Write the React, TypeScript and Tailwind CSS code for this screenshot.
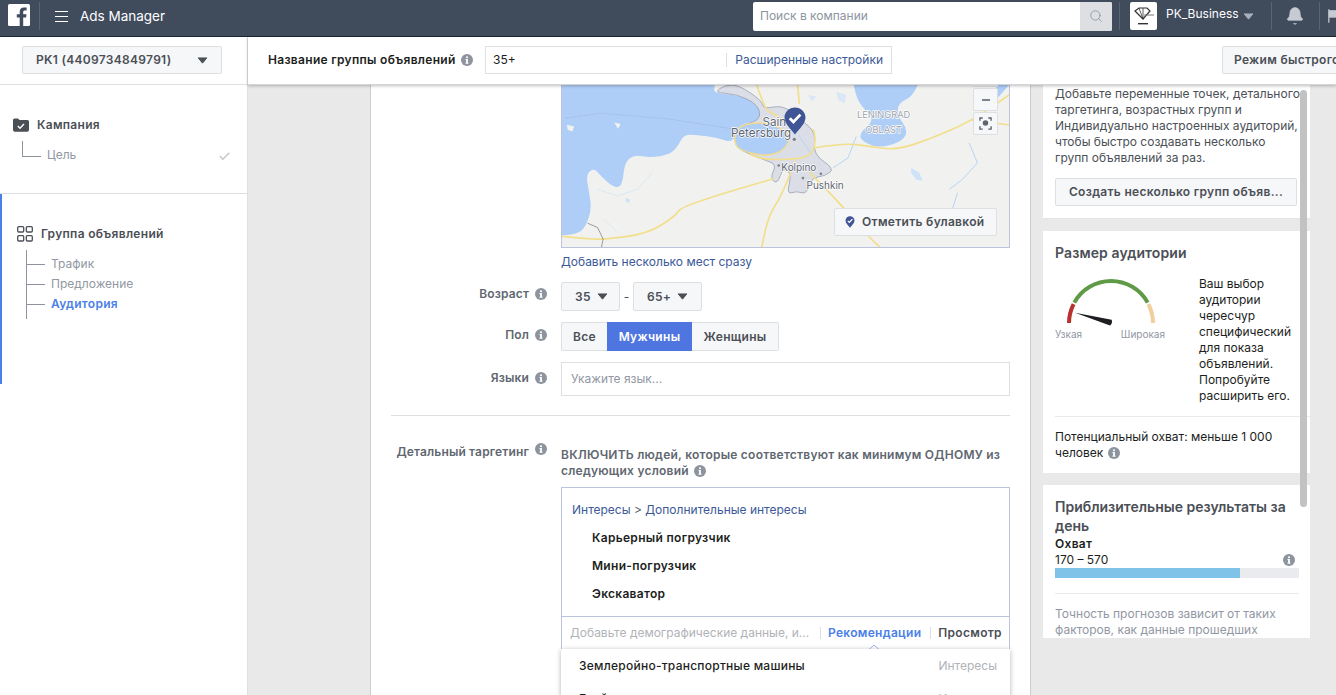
import React from "react";
import { Search, Bell, Check } from "lucide-react";

type P = [number, number];

const smooth = (pts: P[], closed = false) => {
  const mid = (a: P, b: P): P => [(a[0] + b[0]) / 2, (a[1] + b[1]) / 2];
  const n = pts.length;
  if (closed) {
    const s = mid(pts[n - 1], pts[0]);
    let d = `M${s[0]} ${s[1]}`;
    pts.forEach((p, i) => {
      const m = mid(p, pts[(i + 1) % n]);
      d += ` Q${p[0]} ${p[1]} ${m[0]} ${m[1]}`;
    });
    return d + " Z";
  }
  let d = `M${pts[0][0]} ${pts[0][1]}`;
  for (let i = 1; i < n - 1; i++) {
    const m = mid(pts[i], pts[i + 1]);
    d += ` Q${pts[i][0]} ${pts[i][1]} ${m[0]} ${m[1]}`;
  }
  return d + ` L${pts[n - 1][0]} ${pts[n - 1][1]}`;
};

const gulf: P[] = [[-100, -100], [495, -100], [495, 15], [488, 40], [560, 45], [625, 70], [640, 100], [632, 122], [560, 135], [552, 190], [500, 175], [440, 165], [400, 165], [385, 195], [360, 225], [295, 235], [255, 225], [222, 245], [215, 320], [190, 325], [150, 290], [130, 265], [105, 285], [115, 340], [122, 390], [105, 440], [85, 462], [33, 470], [-100, 475]];
const lake: P[] = [[905, -20], [1120, -20], [1090, 50], [1045, 70], [1045, 110], [1075, 150], [1060, 185], [990, 205], [945, 190], [925, 165], [975, 120], [945, 90], [920, 55]];
const district: P[] = [[490, 38], [525, 15], [565, 15], [635, 62], [640, 88], [700, 75], [760, 125], [798, 160], [790, 225], [855, 268], [825, 290], [785, 295], [770, 345], [740, 335], [710, 345], [725, 285], [700, 262], [682, 315], [660, 295], [680, 255], [640, 240], [570, 212], [552, 190], [558, 140], [632, 122], [625, 75], [560, 42]];
const bay: P[] = [[558, 140], [640, 125], [705, 150], [722, 180], [695, 218], [640, 230], [570, 212], [552, 190]];
const roads: P[][] = [
  [[35, 472], [100, 478], [150, 482], [290, 465], [375, 410], [390, 385], [510, 345], [670, 298]],
  [[792, 205], [880, 190], [960, 200], [1040, 212], [1150, 175], [1270, 122], [1380, 45]],
  [[1270, 122], [1378, 135]],
  [[743, 15], [748, 70]],
  [[620, 15], [645, 90], [668, 100], [705, 125]],
  [[790, 150], [798, 165], [790, 225], [740, 240], [640, 240], [600, 225]],
  [[735, 245], [700, 340], [655, 410], [635, 504]],
  [[780, 280], [860, 360], [950, 465], [990, 504]],
];

const Info = ({ className = "" }: { className?: string }) => (
  <svg viewBox="0 0 12 12" className={`w-3 h-3 shrink-0 ${className}`}>
    <circle cx="6" cy="6" r="6" fill="#8d949e" />
    <rect x="5.1" y="5" width="1.8" height="4.4" fill="#fff" />
    <rect x="4.4" y="5" width="1.6" height="0.9" fill="#fff" />
    <rect x="4.4" y="8.7" width="3.2" height="0.9" fill="#fff" />
    <circle cx="6" cy="3.2" r="1.05" fill="#fff" />
  </svg>
);

const Caret = ({ className = "", fill = "#4b4f56" }: { className?: string; fill?: string }) => (
  <svg viewBox="0 0 12 8" className={`w-[11px] h-[7px] shrink-0 ${className}`}>
    <path d="M1 1 H11 L6 7 Z" fill={fill} stroke={fill} strokeWidth="1" strokeLinejoin="round" />
  </svg>
);

const PinShape = ({ className = "" }: { className?: string }) => (
  <svg viewBox="0 0 22 28" className={className}>
    <path d="M11 0.5C5 0.5 0.5 5 0.5 10.6c0 6.4 6.6 11.6 10.5 16.9 3.9-5.3 10.5-10.5 10.5-16.9C21.5 5 17 0.5 11 0.5Z" fill="#3f5595" />
    <path d="M5.8 11.3l3.6 3.6 7-7.3" fill="none" stroke="#fff" strokeWidth="2.8" />
  </svg>
);

const MapDrawing = () => (
  <svg viewBox="33 15 1347 489" className="block w-full h-full" preserveAspectRatio="none">
    <rect x="33" y="15" width="1347" height="489" fill="#f1f2ef" />
    <path d={smooth(gulf, true)} fill="#aecdf7" />
    <path d={smooth(lake, true)} fill="#aecdf7" />
    <path d="M1340 15 H1380 L1345 55 Z" fill="#aecdf7" />
    <path d="M860 35 l30 10 -5 25 -20 -10 Z M775 45 l25 5 -15 15 Z" fill="#d9e7f6" />
    <path d="M1085 265 l25 15 10 25 -20 -5 -15 -20 Z" fill="#cfe2f8" />
    <path d="M225 355 l12 5 -2 12 -10 -6 Z" fill="#cfe2f8" />
    <path d="M48 135 l22 5 -6 15 -14 -5 Z M190 128 l20 5 -8 14 Z" fill="#f1f2ef" />
    <path d="M45 115 L150 100 L360 118 L550 148" fill="none" stroke="#8fa6cc" strokeWidth="1.5" strokeDasharray="5 4" />
    <path d="M850 265 L895 235 L920 170 M1200 330 L1240 300 L1285 250 L1260 190 M1200 420 L1225 340" fill="none" stroke="#a9cdf6" strokeWidth="2.5" />
    <path d="M140 330 L200 350 L260 330 L305 280 M160 420 L200 460" fill="none" stroke="#cfe2f8" strokeWidth="2" />
    <path d={smooth(district, true)} fill="#dbdee6" stroke="#8991a6" strokeWidth="2" strokeLinejoin="round" />
    <path d={smooth(bay, true)} fill="#aecdf7" stroke="#f0dc8a" strokeWidth="4" />
    <path d="M745 165 L785 225" stroke="#a9cdf6" strokeWidth="2" fill="none" />
    <g fill="none" stroke="#f2de8b" strokeWidth="5" strokeLinejoin="round" strokeLinecap="round">
      {roads.map((r, i) => (
        <path key={i} d={smooth(r)} />
      ))}
    </g>
    <path d="M110 432 L140 445 L157 480 L152 504" fill="none" stroke="#6b6f76" strokeWidth="2" />
    <g fill="#7d818a">
      <circle cx="733" cy="179" r="5" />
      <circle cx="686" cy="258" r="4" />
      <circle cx="813" cy="283" r="4" />
      <circle cx="759" cy="296" r="4" />
    </g>
    <g fontFamily="Inter, sans-serif" stroke="#fff" strokeWidth="4" paintOrder="stroke" strokeLinejoin="round">
      <text x="637" y="138" fontSize="35" fill="#5d6472">Sain</text>
      <text x="542" y="171" fontSize="35" fill="#5d6472">Petersburg</text>
      <text x="694" y="274" fontSize="30" fill="#5d6472">Kolpino</text>
      <text x="770" y="328" fontSize="30" fill="#5d6472">Pushkin</text>
      <text x="922" y="115" fontSize="28" fill="#a0a4ac">LENINGRAD</text>
      <text x="947" y="159" fontSize="28" fill="#a0a4ac">OBLAST</text>
    </g>
  </svg>
);

const Gauge = () => (
  <svg viewBox="0 0 110 52" className="block w-[110px] h-[52px]">
    <g fill="none" strokeWidth="4">
      <path d="M14 48 A42 42 0 0 1 18.6 29.2" stroke="#b8312f" />
      <path d="M19.3 27.6 A42 42 0 0 1 92.7 27.6" stroke="#5f9a47" />
      <path d="M93.4 29.2 A42 42 0 0 1 98 48" stroke="#f0cf9d" />
    </g>
    <path d="M20 37.7 L56.6 44.8 Q58 48 55 50.6 Z" fill="#1c1e21" />
  </svg>
);

const Row = ({ label, children, className = "", labelClass = "items-center -translate-y-[2px]" }: { label: string; children: React.ReactNode; className?: string; labelClass?: string }) => (
  <div className={`grid grid-cols-[156px_449px] gap-x-[14px] ${className}`}>
    <div className={`flex justify-end gap-[6px] text-[12px] font-semibold tracking-[0.15px] text-[#606770] whitespace-nowrap ${labelClass}`}>
      <span>{label}</span>
      <Info />
    </div>
    <div>{children}</div>
  </div>
);

const btn = "border border-[#dddfe2] bg-[#f6f7f9] rounded-[2px] text-[12px] font-semibold tracking-[0.3px] text-[#4b4f56] flex items-center";

export default function App() {
  return (
    <div className="w-[1336px] h-[695px] overflow-hidden flex flex-col bg-white text-[12px] text-[#1c1e21] font-['Inter','Liberation_Sans',sans-serif]">
      {/* Top bar */}
      <header className="h-[37px] shrink-0 bg-[#404b5c] border-b border-[#1f2630] flex items-center pb-[4px] text-white">
        <svg viewBox="0 0 22 22" className="w-[22px] h-[22px] ml-2 shrink-0 -translate-y-[1px]">
          <rect width="22" height="22" rx="1.5" fill="#fff" />
          <path d="M15.2 22v-8.5h2.9l.4-3.3h-3.3V8.1c0-1 .3-1.6 1.6-1.6h1.8V3.600c-.3 0-1.400-.1-2.600-.1-2.600 0-4.300 1.500-4.300 4.400v2.300H8.800v3.300h2.900V22Z" fill="#404b5c" />
        </svg>
        <div className="w-px h-[28px] bg-[#5a6474] ml-[9px] shrink-0" />
        <div className="ml-[15px] w-[13px] flex flex-col gap-[4px] shrink-0">
          <div className="h-px bg-white" />
          <div className="h-px bg-white" />
          <div className="h-px bg-white" />
        </div>
        <span className="ml-[12px] w-[85px] shrink-0 whitespace-nowrap text-[13.5px]">Ads Manager</span>
        <div className="ml-[588px] w-[359px] h-[29px] shrink-0 bg-white rounded-[2px] flex items-center overflow-hidden">
          <span className="flex-1 pl-[7px] text-[12px] text-[#8d949e]">Поиск в компании</span>
          <div className="w-[32px] h-full bg-[#dddfe2] flex items-center justify-center">
            <Search className="w-[14px] h-[14px] text-[#8d949e]" strokeWidth={1.4} />
          </div>
        </div>
        <div className="w-px h-[28px] bg-[#5a6474] ml-[7px] shrink-0" />
        <div className="ml-[10px] w-[27px] h-[28px] shrink-0 bg-white rounded-[2px] flex items-center justify-center">
          <svg viewBox="0 0 24 24" className="w-[24px] h-[24px]">
            <path d="M3 7 L7 4 H15 L18 7 L11 15 Z" fill="none" stroke="#333" strokeWidth="1.2" />
            <path d="M7 4 L11 15 L11 4" fill="none" stroke="#333" strokeWidth="0.8" />
            <path d="M12 11 H22" stroke="#777" strokeWidth="1" />
            <rect x="6" y="19" width="10" height="1.400" fill="#333" />
          </svg>
        </div>
        <span className="ml-[9px] w-[66px] shrink-0 -mt-[4px] text-[12px] whitespace-nowrap">PK_Business</span>
        <Caret className="ml-[11px]" fill="#aab0ba" />
        <div className="w-px h-[28px] bg-[#5a6474] ml-[17px] shrink-0" />
        <Bell className="ml-[13px] w-[20px] h-[20px] text-[#c6cad2] shrink-0" fill="#c6cad2" strokeWidth={1} />
        <div className="w-px h-[28px] bg-[#5a6474] ml-[14px] shrink-0" />
        <svg viewBox="0 0 12 22" className="ml-[8px] w-[10px] h-[20px] shrink-0">
          <path d="M1 3 V19" stroke="#c6cad2" strokeWidth="1.500" />
          <rect x="1" y="4" width="11" height="9" fill="#c6cad2" />
        </svg>
      </header>

      <div className="flex-1 flex min-h-0">
        {/* Sidebar */}
        <aside className="w-[248px] shrink-0 border-r border-[#dddfe2] bg-white flex flex-col">
          <div className="h-[48px] shrink-0 border-b border-[#dddfe2] pl-[22px] pt-[9px]">
            <div className={`${btn} w-[200px] h-[28px] pl-[13px] pr-[13px] justify-between`}>
              <span>PK1 (4409734849791)</span>
              <Caret />
            </div>
          </div>
          <div className="h-[109px] shrink-0 border-b border-[#dddfe2] pl-[13px] pt-[31px]">
            <div className="flex items-center gap-[8px] h-[18px]">
              <svg viewBox="0 0 16 14" className="w-[16px] h-[14px]">
                <path d="M0 2 Q0 .5 1.500 .5 H5 L6.500 2 H14.500 Q16 2 16 3.500 V12 Q16 13.800 14.200 13.800 H1.800 Q0 13.800 0 12 Z" fill="#4b4f56" />
                <path d="M4.800 8 L7 10.200 L11 6" fill="none" stroke="#fff" strokeWidth="1.400" />
              </svg>
              <span className="font-semibold tracking-[0.3px] text-[#4b4f56]">Кампания</span>
            </div>
            <div className="flex items-end ml-[9px] mt-[7px] pr-[16px]">
              <div className="w-[19px] h-[16px] border-l border-b border-[#8d949e]" />
              <span className="ml-[6px] text-[#9197a3] leading-[16px] translate-y-[6px]">Цель</span>
              <Check className="ml-auto w-[13px] h-[13px] text-[#c4c8ce] translate-y-[6px]" strokeWidth={3} />
            </div>
          </div>
          <div className="h-[190px] shrink-0 border-l-2 border-[#4a80e8] pl-[15px] pt-[31px]">
            <div className="flex items-center gap-[8px] h-[18px]">
              <svg viewBox="0 0 16 16" className="w-[16px] h-[16px]">
                <g fill="none" stroke="#4b4f56" strokeWidth="1.300">
                  <rect x=".7" y=".7" width="6" height="5.300" rx="1" />
                  <rect x="9.300" y=".7" width="6" height="5.300" rx="1" />
                  <rect x=".7" y="9.700" width="6" height="5.300" rx="1" />
                  <rect x="9.300" y="9.700" width="6" height="5.300" rx="1" />
                </g>
              </svg>
              <span className="font-semibold tracking-[0.3px] text-[#4b4f56]">Группа объявлений</span>
            </div>
            <div className="ml-[9px] mt-[7px] border-l border-[#8d949e] flex flex-col h-[69px] pt-[4px]">
              {[
                ["Трафик", "text-[#9197a3]"],
                ["Предложение", "text-[#9197a3]"],
                ["Аудитория", "text-[#4a80e8] font-semibold tracking-[0.3px]"],
              ].map(([t, c]) => (
                <div key={t} className="flex items-center h-[20px]">
                  <div className="w-[18px] h-px bg-[#8d949e]" />
                  <span className={`ml-[6px] ${c}`}>{t}</span>
                </div>
              ))}
            </div>
          </div>
        </aside>

        <div className="flex-1 flex flex-col min-w-0">
          {/* Title bar */}
          <div className="relative z-10 h-[48px] shrink-0 bg-white border-b border-[#d4d5d8] shadow-[0_1px_3px_rgba(0,0,0,0.25)] flex items-center pl-[20px] pb-[1px] overflow-x-clip">
            <span className="w-[188px] shrink-0 whitespace-nowrap font-semibold tracking-[0.3px] text-[#1c1e21]">Название группы объявлений</span>
            <Info className="ml-[5px]" />
            <div className="ml-[12px] w-[407px] h-[28px] shrink-0 border border-[#dddfe2] flex items-center pl-[7px]">
              <span className="flex-1 text-[#1c1e21]">35+</span>
              <div className="h-[14px] w-px bg-[#dddfe2]" />
              <span className="px-[8px] text-[#3b5998] whitespace-nowrap">Расширенные настройки</span>
            </div>
            <div className={`${btn} ml-[330px] w-[130px] h-[28px] pl-[11px] shrink-0 whitespace-nowrap overflow-hidden`}>Режим быстрого</div>
          </div>

          <div className="flex-1 min-h-0 flex bg-[#e9e9e9]">
            <div className="w-[122px] shrink-0" />
            {/* Form */}
            <main className="w-[661px] shrink-0 bg-white border-x border-[#cdcdcd] px-[20px]">
              <div className="ml-[170px] w-[449px] h-[163px] relative border-b border-[#bcc3dc] border-x box-border">
                <MapDrawing />
                <PinShape className="absolute left-[222px] top-[22px] w-[22px] h-[28px]" />
                <div className="absolute left-[411px] top-0 w-[25px] h-[2px] bg-[#f6f7f9] border-b border-[#dddfe2]" />
                <div className="absolute left-[411px] top-[3px] w-[25px] h-[23px] bg-[#f6f7f9] border border-[#dddfe2] rounded-[2px] flex items-center justify-center">
                  <div className="w-[8px] h-[2px] bg-[#7f8590]" />
                </div>
                <div className="absolute left-[411px] top-[27px] w-[25px] h-[23px] bg-[#f6f7f9] border border-[#dddfe2] rounded-[2px] flex items-center justify-center">
                  <svg viewBox="0 0 14 14" className="w-[13px] h-[13px]" fill="none" stroke="#5f6570" strokeWidth="1.500">
                    <path d="M1 4V1H4M10 1H13V4M13 10V13H10M4 13H1V10" />
                    <circle cx="7" cy="6.500" r="2.200" fill="#5f6570" />
                  </svg>
                </div>
                <div className={`${btn} absolute left-[272px] top-[123px] w-[163px] h-[28px] pl-[10px] gap-[7px]`}>
                  <svg viewBox="0 0 22 28" className="w-[10px] h-[12px]">
                    <path d="M11 .5C5 .5.5 5 .5 10.600c0 6.400 6.600 11.600 10.500 16.900 3.900-5.300 10.500-10.500 10.500-16.900C21.500 5 17 .5 11 .5Z" fill="#3f5595" />
                    <path d="M5.800 11.300l3.600 3.600 7-7.300" fill="none" stroke="#fff" strokeWidth="3" />
                  </svg>
                  <span>Отметить булавкой</span>
                </div>
              </div>
              <div className="ml-[170px] mt-[5px] leading-[18px] text-[#3b5998]">Добавить несколько мест сразу</div>

              <Row label="Возраст" className="mt-[11px]" labelClass="items-center -translate-y-[3px]">
                <div className="flex items-center h-[29px]">
                  <div className={`${btn} w-[59px] h-[29px] pl-[13px] gap-[6px]`}>
                    <span>35</span>
                    <Caret />
                  </div>
                  <span className="w-[13px] text-center text-[#4b4f56]">-</span>
                  <div className={`${btn} w-[69px] h-[29px] pl-[13px] gap-[6px]`}>
                    <span>65+</span>
                    <Caret />
                  </div>
                </div>
              </Row>
              <Row label="Пол" className="mt-[11px]">
                <div className="flex h-[29px] w-[218px]">
                  <div className={`${btn} w-[46px] justify-center rounded-r-none border-r-0`}>Все</div>
                  <div className="w-[85px] bg-[#4e75e0] text-white font-semibold tracking-[0.3px] flex items-center justify-center">Мужчины</div>
                  <div className={`${btn} w-[87px] justify-center rounded-l-none border-l-0`}>Женщины</div>
                </div>
              </Row>
              <Row label="Языки" className="mt-[11px]" labelClass="items-center -translate-y-[1px]">
                <div className="h-[34px] border border-[#dddfe2] flex items-center pl-[9px] text-[#9197a3]">Укажите язык...</div>
              </Row>

              <div className="mt-[19px] h-px bg-[#dddfe2]" />

              <Row label="Детальный таргетинг" className="mt-[30px]" labelClass="items-start -mt-[3px]">
                <div className="font-semibold tracking-[0.23px] text-[#606770] leading-[16px] pt-[1px] h-[32px] whitespace-nowrap">
                  ВКЛЮЧИТЬ людей, которые соответствуют как минимум ОДНОМУ из
                  <br />
                  <span className="inline-flex items-center gap-[5px]">
                    следующих условий <Info />
                  </span>
                </div>
                <div className="relative mt-[9px] h-[163px] border border-[#bcc3dc] flex flex-col">
                  <div className="flex-1 pt-[13px]">
                    <div className="pl-[10px] leading-[18px] text-[#3b5998]">
                      Интересы <span className="text-[#4b4f56]">&gt;</span> Дополнительные интересы
                    </div>
                    <div className="pl-[30px] mt-[10px] flex flex-col gap-[10px] font-semibold tracking-[0.3px] leading-[18px] text-[#1c1e21]">
                      <div>Карьерный погрузчик</div>
                      <div>Мини-погрузчик</div>
                      <div>Экскаватор</div>
                    </div>
                  </div>
                  <div className="h-[33px] shrink-0 border-t border-[#bcc3dc] flex items-center pl-[8px] relative whitespace-nowrap">
                    <span className="w-[250px] text-[#b0b3b8] overflow-hidden">Добавьте демографические данные, и...</span>
                    <div className="h-[12px] w-px bg-[#dddfe2] shrink-0" />
                    <span className="ml-[7px] font-semibold tracking-[0.3px] text-[#4a80e8]">Рекомендации</span>
                    <div className="ml-[9px] h-[12px] w-px bg-[#dddfe2] shrink-0" />
                    <span className="ml-[7px] font-semibold tracking-[0.3px] text-[#4b4f56]">Просмотр</span>
                    <svg viewBox="0 0 12 6" className="absolute left-[306px] bottom-[-1px] w-[12px] h-[6px]">
                      <path d="M1 5.500 L6 1 L11 5.500" fill="none" stroke="#9fb6e6" strokeWidth="1" />
                    </svg>
                  </div>
                  <div className="absolute left-[-1px] right-[-1px] top-full bg-white shadow-[0_1px_5px_rgba(0,0,0,0.3)] h-[60px] px-[18px] pt-[8px]">
                    <div className="flex justify-between h-[18px] items-center">
                      <span className="font-medium tracking-[0.25px] text-[#1c1e21]">Землеройно-транспортные машины</span>
                      <span className="-mr-[5px] text-[#b0b3b8]">Интересы</span>
                    </div>
                    <div className="flex justify-between h-[18px] items-center mt-[15px]">
                      <span className="font-medium tracking-[0.25px] text-[#1c1e21]">Грейдер</span>
                      <span className="-mr-[5px] text-[#b0b3b8]">Интересы</span>
                    </div>
                  </div>
                </div>
              </Row>
            </main>

            {/* Right column */}
            <div className="w-[306px] shrink-0 pl-[12px]">
              <div className="relative w-[267px] h-[553px] overflow-hidden flex flex-col gap-[12px]">
                <section className="bg-white shrink-0 h-[134px] px-[12px] pt-[1px] border-b border-[#e3e4e6]">
                  <p className="leading-[16px] text-[#4b4f56] whitespace-nowrap">
                    Добавьте переменные точек, детального
                    <br />
                    таргетинга, возрастных групп и
                    <br />
                    Индивидуально настроенных аудиторий,
                    <br />
                    чтобы быстро создавать несколько
                    <br />
                    групп объявлений за раз.
                  </p>
                  <div className={`${btn} mt-[12px] h-[28px] w-[242px] justify-center whitespace-nowrap`}>Создать несколько групп объяв...</div>
                </section>
                <section className="bg-white shrink-0 h-[242px] pl-[12px] pt-[13px]">
                  <h2 className="text-[14px] font-semibold leading-[18px] text-[#4b4f56] tracking-[0.1px]">Размер аудитории</h2>
                  <div className="flex mt-[13px] h-[130px]">
                    <div className="w-[110px] shrink-0">
                      <Gauge />
                      <div className="flex justify-between text-[10px] leading-[14px] text-[#9197a3]">
                        <span>Узкая</span>
                        <span>Широкая</span>
                      </div>
                    </div>
                    <p className="ml-[34px] leading-[16px] text-[#1c1e21] mt-[1px]">
                      Ваш выбор
                      <br />
                      аудитории
                      <br />
                      чересчур
                      <br />
                      специфический
                      <br />
                      для показа
                      <br />
                      объявлений.
                      <br />
                      Попробуйте
                      <br />
                      расширить его.
                    </p>
                  </div>
                  <div className="mt-[11px] h-px bg-[#e9ebee]" />
                  <div className="mt-[12px] leading-[16px] text-[#1c1e21]">
                    Потенциальный охват: меньше 1 000
                    <div className="flex items-center gap-[5px]">
                      человек <Info />
                    </div>
                  </div>
                </section>
                <section className="bg-white shrink-0 h-[200px] px-[12px] pt-[12px]">
                  <h2 className="text-[14px] font-semibold leading-[19px] text-[#4b4f56]">Приблизительные результаты за день</h2>
                  <div className="font-semibold tracking-[0.3px] leading-[16px] text-[#1c1e21] mt-[1px]">Охват</div>
                  <div className="flex justify-between items-center leading-[16px] text-[#1c1e21]">
                    <span>170 – 570</span>
                    <Info className="mr-[3px]" />
                  </div>
                  <div className="h-[10px] w-[244px] bg-[#e9ebee]">
                    <div className="h-full bg-[#80c3e9]" style={{ width: "76%" }} />
                  </div>
                  <div className="mt-[15px] w-[244px] h-px bg-[#e9ebee]" />
                  <p className="mt-[12px] leading-[16px] text-[#9197a3] whitespace-nowrap">
                    Точность прогнозов зависит от таких
                    <br />
                    факторов, как данные прошедших
                  </p>
                </section>
                <div className="absolute right-[3px] top-[5px] w-[7px] h-[417px] rounded-full bg-[#c2c2c2]" />
              </div>
            </div>
          </div>
        </div>
      </div>
    </div>
  );
}
